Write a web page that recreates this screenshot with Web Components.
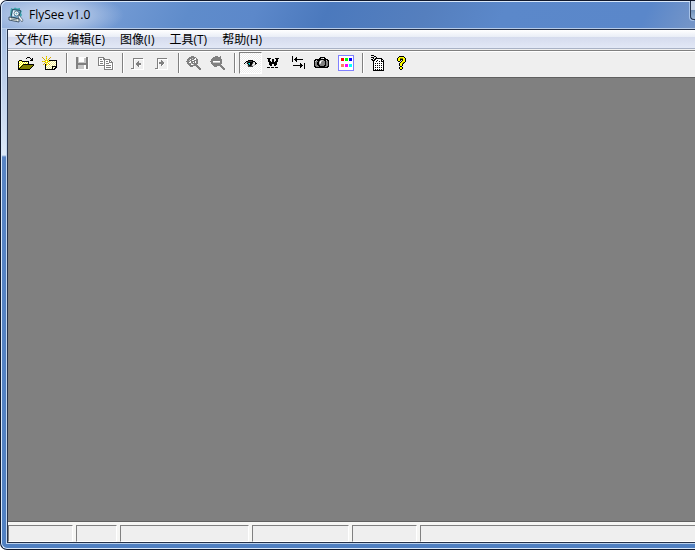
<!DOCTYPE html>
<html lang="zh-CN">
<head>
<meta charset="utf-8">
<title>FlySee v1.0</title>
<style>
html,body{margin:0;height:100%;background:#fff;overflow:hidden}
body{font:12px/16px "Open Sans","Noto Sans","Noto Sans CJK SC",sans-serif;color:#000}
</style>
</head>
<body>
<app-window>
  <title-bar slot="title"><pixel-icon slot="icon" name="app"></pixel-icon>FlySee v1.0</title-bar>
  <menu-bar slot="menu">
    <menu-entry>文件(F)</menu-entry><menu-entry>编辑(E)</menu-entry><menu-entry>图像(I)</menu-entry><menu-entry>工具(T)</menu-entry><menu-entry>帮助(H)</menu-entry>
  </menu-bar>
  <tool-bar slot="tools">
    <tool-button icon="open" label="打开"></tool-button><tool-button icon="fresh" label="新建"></tool-button>
    <tool-separator></tool-separator>
    <tool-button icon="save" label="保存" disabled></tool-button><tool-button icon="copy" label="复制" disabled></tool-button>
    <tool-separator></tool-separator>
    <tool-button icon="prev" label="上一个" disabled></tool-button><tool-button icon="next" label="下一个" disabled></tool-button>
    <tool-separator></tool-separator>
    <tool-button icon="zoomin" label="放大" disabled></tool-button><tool-button icon="zoomout" label="缩小" disabled></tool-button>
    <tool-separator></tool-separator>
    <tool-button icon="eye" label="查看" pressed></tool-button><tool-button icon="w" label="文字"></tool-button><tool-button icon="swap" label="转换"></tool-button><tool-button icon="camera" label="截图"></tool-button><tool-button icon="palette" label="颜色"></tool-button>
    <tool-separator></tool-separator>
    <tool-button icon="props" label="属性"></tool-button><tool-button icon="help" label="帮助"></tool-button>
  </tool-bar>
  <status-bar slot="status">
    <status-panel style="--w:65px"></status-panel><status-panel style="--w:41px"></status-panel><status-panel style="--w:129px"></status-panel><status-panel style="--w:97px"></status-panel><status-panel style="--w:65px"></status-panel><status-panel grow></status-panel>
  </status-bar>
</app-window>
<script>
const define = (name, html, setup) => customElements.define(name, class extends HTMLElement {
  constructor() {
    super();
    this.attachShadow({ mode: "open" }).innerHTML = html;
  }
  connectedCallback() { if (setup) setup(this, this.shadowRoot); }
});

const palette = { K:"#000", G:"#808080", W:"#fff", Y:"#ffff00", y:"#ffff66", O:"#808000", D:"#404040",
  S:"#c8c8c8", R:"#ff0000", E:"#00ff00", B:"#0000ff", o:"#ff8060", M:"#ff00ff", C:"#00ffff", T:"#16a39f", P:"#8080ff", g:"#d8a800", e:"#f4f08c" };

const art = {
open:[
"................",
".........KKK....",
"........K...K.K.",
".............KK.",
".KKK........KKK.",
"KYWYKKKKKKK.....",
"KWYWYWYWYWK.....",
"KYWYWYWYWYK.....",
"KWYWYKKKKKKKKKKK",
"KYWYKOOOOOOOOOOK",
"KWYKOOOOOOOOOOK.",
"KYKOOOOOOOOOOK..",
"KKOOOOOOOOOOK...",
"KKKKKKKKKKKK...."],
fresh:[
"....g...........",
"g...Y...g.......",
".g..g..g........",
"..g.Y.g.........",
"...gYg.KKKKKKKK.",
"gYgYWYgYeWeWeWK.",
"...gYgWeWeWeWeK.",
"..g.YWgWeWeWeWK.",
".g.KgYWgWeWeWeK.",
"...KYWeWeWeWeWK.",
"...KWeWeWeKKKKK.",
"...KeWeWeWKeWKK.",
"...KWeWeWeKWKK..",
"...KKKKKKKKKK..."],
save:[
"................",
"..GGSWWWWWWWGG..",
"..GGSWWWWWSSGGW.",
"..GGSWWWWWSSGGW.",
"..GGSWWWWWSSGGW.",
"..GGSWWWWWSSGGW.",
"..GGSSSSSSSSGGW.",
"..GGGGGGGGGGGGW.",
"..GGGGGGGGGGGGW.",
"..GGSSSSSSWWGGW.",
"..GGSSSSSSWWGGW.",
"..GGSSSSSSWWGGW.",
"..GGSSSSSSWWGGW.",
"...WWWWWWWWWWWW."],
copy:[
"................",
"GGGGGG..........",
"GWWWWGG.........",
"GWGGWGGGGGGG....",
"GWWWWWGWWWWGG...",
"GWGGGWGWGGWGWG..",
"GWWWWWGWWWWGGGG.",
"GWGGGWGWGGGWWWGW",
"GWWWWWGWWWWWWWGW",
"GGGGGGGWGGGGGWGW",
".WWWWWGWWWWWWWGW",
"......GWGGGGGWGW",
"......GWWWWWWWGW",
"......GGGGGGGGGW"],
prev:[
"................",
"................",
"...GGGGGGGGGG...",
"...GWWWWWWWWWW..",
"...GW........W..",
"...GW...G....W..",
"...GW..GG....W..",
"...GW.GGGGG..W..",
"...GW.GGGGG..W..",
"...GW..GGWW..W..",
"...GW...GW...W..",
"...GW........W..",
".GGGW........W..",
"..WWWWWWWWWWWW.."],
next:[
"................",
"................",
"...GGGGGGGGGG...",
"...GWWWWWWWWWW..",
"...GW..G.....W..",
"...GW..GG....W..",
"...GWGGGGG...W..",
"...GWGGGGGW..W..",
"...GW.WGGW...W..",
"...GW..GW....W..",
"...GW........W..",
"...GW........W..",
".GGGW........W..",
"..WWWWWWWWWWWW.."],
zoomin:[
".....GGG........",
"...GGGGGGG......",
"..GGGGSGGWG.....",
".GGGWGGGWWGG....",
".GGSGGWWGGGG....",
"GGGGWGGGGWGG....",
".GGWWGGWGWGG....",
".GGGGSGGGGGG....",
"..GGGWWSGGG.....",
"...GGGGGGGGG....",
"....GGG...GGG...",
"...........GGG..",
"............GGG.",
".............GG."],
zoomout:[
".....GGG..G.....",
"...GGGGGGGG.....",
"..GGGGGGGGG.....",
".GGGGGGGGGGG....",
".GGGGGGGGGGG....",
"GGGWWWWWWWGG....",
".GGSSSSSSSGG....",
".GGGGGGGGGGG....",
"..GGGGGGGGG.....",
"...GGGGGGGGG....",
"....GGG...GGG...",
"...........GGG..",
"............GGG.",
".............GG."],
eye:[
"................",
"................",
"................",
"................",
"......KKKKK.....",
"....KKDDDDKKK...",
"...KSDKKKKKSSK..",
"..K.SKTCKKDSWKK.",
"...SWSKTKKSWSD..",
".....SDKKDSSS...",
"......DDDDD.....",
"................",
"................",
"................"],
w:[
"................",
"................",
".KKKK....KKKK...",
"..KK..KK..KK....",
"..KK..KK..KK....",
"..KKK.KK.KKK....",
"...KKKKKKKK.....",
"...KKKKKKKK.....",
"...KKK..KKK.....",
"....KK..KK......",
"................",
".KKK.KKK.KKK....",
"................",
"................"],
swap:[
"..K.............",
"..K...K.........",
"..K..KK.........",
"..K.KKKKKKKKK...",
"..K..KK.........",
"..K...K.........",
"................",
"..........K...K.",
"..........KK..K.",
"...KKKKKKKKKK.K.",
"..........KK..K.",
"..........K...K.",
"..............K.",
"................"],
camera:[
"................",
"......KKKKK.....",
".....KKSSWKK....",
".KKKKKKKKKKKKK..",
"KKSKKKGSSGKKSKK.",
"KSGGKGWSGGGKGGK.",
"KGGKKSWGGGGKGGK.",
"KGGKKSSGGGGKGGK.",
"KGGKKGGGGGGKGGK.",
"KGGGKKGGGGKKGGK.",
"KKGGGKKKKKKGGKK.",
".KKKKKKKKKKKKK..",
"................",
"................"],
palette:[
"PPPPPPPPPPPPPPPP",
"PWWWWWWWWWWWWWWP",
"PWWWWWWWWWWWWWWP",
"PWWRRRWEEEWBBBWP",
"PWWRRRWEEEWBBBWP",
"PWWRRRWEEEWBBBWP",
"PWWWWWWWWWWWWWWP",
"PWWWWWWWWWWWWWWP",
"PWWWWWWWWWWWWWWP",
"PWWoooWMMMWCCCWP",
"PWWoooWMMMWCCCWP",
"PWWoooWMMMWCCCWP",
"PWWWWWWWWWWWWWWP",
"PWWWWWWWWWWWWWWP",
"PWWWWWWWWWWWWWWP",
"PPPPPPPPPPPPPPPP"],
props:[
".KKK............",
"....KK..........",
".KKK..K.........",
"...K.KKKKKKK....",
".KK.KKWWWWWKK...",
"..KKKWWKWWWKWK..",
"...KWWKWWKWKKK..",
"...KWWWWWWWWWK..",
"...KWKWKWKWKWK..",
"...KWWWWWWWWWK..",
"...KWKWKWKWKWK..",
"...KWWWWWWWWWK..",
"...KWKWKWKWKWK..",
"...KWWWWWWWWWK..",
"...KWKWKWKWKWK..",
"...KKKKKKKKKKK.."],
help:[
".....KKKKK......",
"....KYYYYYK.....",
"...KYYOOOYYK....",
"...KYYKKKYYK....",
"...KYYK.KYYK....",
"....KK.KYYYK....",
"......KYYOK.....",
".....KYYOK......",
".....KYYK.......",
".....KYYK.......",
"......KK........",
".....KYYK.......",
".....KYYK.......",
"......KK........"]
};

const drawing = `<g shape-rendering="auto">
<path d="M3 1l2 1 2-1.500 2 1 3-.5 0 2 2 1-1 2 1 2-2 3-8 0-2-3z" fill="#3ba5ad"/>
<path d="M4.500 2.500l8 1-2 8-7.500-1.500z" fill="#86b8dd" stroke="#20394d" stroke-width=".8"/>
<path d="M5.300 3.500l2.500.3-2 5.200-1.500-.3z" fill="#f3fdff"/>
<circle cx="8.500" cy="6.500" r="2.500" fill="#fff" stroke="#315972" stroke-width=".8"/>
<circle cx="8.500" cy="6.500" r="1" fill="#64a8c1"/>
<path d="M11 8l4 5-1 2-4-5z" fill="#f6f8fa" stroke="#30485d" stroke-width=".6"/>
<path d="M1 10l10 2 0 3-10-2z" fill="#f2f2e8" stroke="#273e51" stroke-width=".8"/>
<path d="M3 12l6 1" stroke="#4d6877" stroke-width=".8"/></g>`;

define("pixel-icon", `<style>:host{display:block;width:16px;height:16px}svg{display:block;width:16px;height:16px}</style><svg viewBox="0 0 16 16" shape-rendering="crispEdges" aria-hidden="true"></svg>`, (el, root) => {
  const svg = root.querySelector("svg");
  const rows = art[el.getAttribute("name")];
  if (!rows) { svg.innerHTML = drawing; return; }
  const top = Math.floor((16 - rows.length) / 2);
  let out = "";
  rows.forEach((row, y) => {
    for (let x = 0; x < row.length;) {
      const key = row[x];
      let n = 1;
      while (row[x + n] === key) n++;
      if (palette[key]) out += `<rect x="${x}" y="${y + top}" width="${n}" height="1" fill="${palette[key]}"/>`;
      x += n;
    }
  });
  svg.innerHTML = out;
});

define("app-window", `<style>
:host{display:flex;flex-direction:column;position:relative;box-sizing:border-box;height:100vh;overflow:hidden;border:1px solid #10182c;border-right:0;border-radius:7px 0 0 7px;background:linear-gradient(#97b4df 0,#b5c9e7 60px,#dce8f7 154px,#5884c4 156px,#5080c2 100%)}
:host::before{content:"";position:absolute;inset:0;border:1px solid #d9e8fa;border-right:0;border-radius:6px 0 0 6px;pointer-events:none;z-index:1}
.client{flex:1;min-height:0;display:flex;flex-direction:column;margin:0 0 5px 5px;border-left:1px solid #c5d8f0;border-bottom:1px solid #b9d0ec}
.inner{flex:1;min-height:0;display:flex;flex-direction:column;border:1px solid #26324a;border-right:0}
main{flex:1;min-height:0;background:#808080;border-top:1px solid #606060;border-bottom:1px solid #606060}
.caption{position:absolute;right:0;top:0;width:5px;height:19px;box-sizing:border-box;padding:0;border:solid #26344d;border-width:0 0 1px 1px;border-radius:0 0 0 4px;background:linear-gradient(#c9d5e8 0 50%,#7090b8 50%,#9cb7d8);box-shadow:-1px 1px 0 #a8c3e8;z-index:2}
</style><slot name="title"></slot><div class="client"><div class="inner"><slot name="menu"></slot><slot name="tools"></slot><main></main><slot name="status"></slot></div></div><button class="caption" aria-label="最小化"></button>`);

define("title-bar", `<style>
:host{display:flex;align-items:center;gap:5px;height:28px;flex:none;padding:1px 0 0 7px;box-sizing:border-box;border-bottom:1px solid #b8cce8;
background:radial-gradient(ellipse 75px 24px at 48px 14px,#c5d5ed 0,#b4c8e7cc 50%,#9ab5df00 100%),linear-gradient(115deg,#87a7d9 0,#7199d3 110px,#5f8ccb 175px,#5c88ca 235px,#4b79bd 300px,#557fbe 390px,#5b88ca 460px,#5a87ca 590px,#7696c8 100%)}
</style><slot name="icon"></slot><slot></slot>`);

define("menu-bar", `<style>
:host{display:flex;flex:none;gap:1px;height:20px;box-sizing:border-box;background:linear-gradient(#fff 0,#e9edf6 7px,#d5dbed 7px,#e2e8f6 18px,#a9b2c5 18px 19px,#f0f0f0 19px)}
</style><slot></slot>`);
define("menu-entry", `<style>:host{display:block}button{font:inherit;color:inherit;border:0;background:none;margin:0;padding:2px 7px 0;height:18px;line-height:16px;white-space:nowrap}</style><button type="button"><slot></slot></button>`);

define("tool-bar", `<style>
:host{display:flex;flex:none;height:27px;box-sizing:border-box;padding:1px 0 0 6px;background:#efefef;border-top:1px solid #808080;box-shadow:inset 0 1px #fff}
</style><slot></slot>`);
define("tool-separator", `<style>:host{flex:none;display:flex;justify-content:flex-end;width:8px;padding-top:1px;height:21px;box-sizing:content-box}:host{height:20px}i{width:1px;margin-right:2px;background:#808080;border-right:1px solid #fff}</style><i></i>`);
define("tool-button", `<style>
:host{display:block;flex:none;width:24px;height:22px}
button{display:flex;align-items:center;box-sizing:border-box;width:23px;height:22px;margin:0 0 0 1px;padding:0 0 0 2px;border:1px solid transparent;background:none}
:host([pressed]) button{border-color:#808080 #fff #fff #808080;background:repeating-conic-gradient(#fff 0 25%,#ededed 0 50%) 0 0/2px 2px}
</style><button type="button"></button>`, (el, root) => {
  const button = root.querySelector("button");
  button.setAttribute("aria-label", el.getAttribute("label"));
  button.disabled = el.hasAttribute("disabled");
  button.innerHTML = `<pixel-icon name="${el.getAttribute("icon")}"></pixel-icon>`;
});

define("status-bar", `<style>:host{display:flex;flex:none;gap:3px;height:20px;padding-top:3px;box-sizing:border-box;background:#f6f6f4}</style><slot></slot>`);
define("status-panel", `<style>:host{display:block;flex:0 0 var(--w);box-sizing:border-box;background:#efefef;border:1px solid;border-color:#808080 #fff #fff #808080}:host([grow]){flex:1;border-right:0}</style>`);
</script>
</body>
</html>
